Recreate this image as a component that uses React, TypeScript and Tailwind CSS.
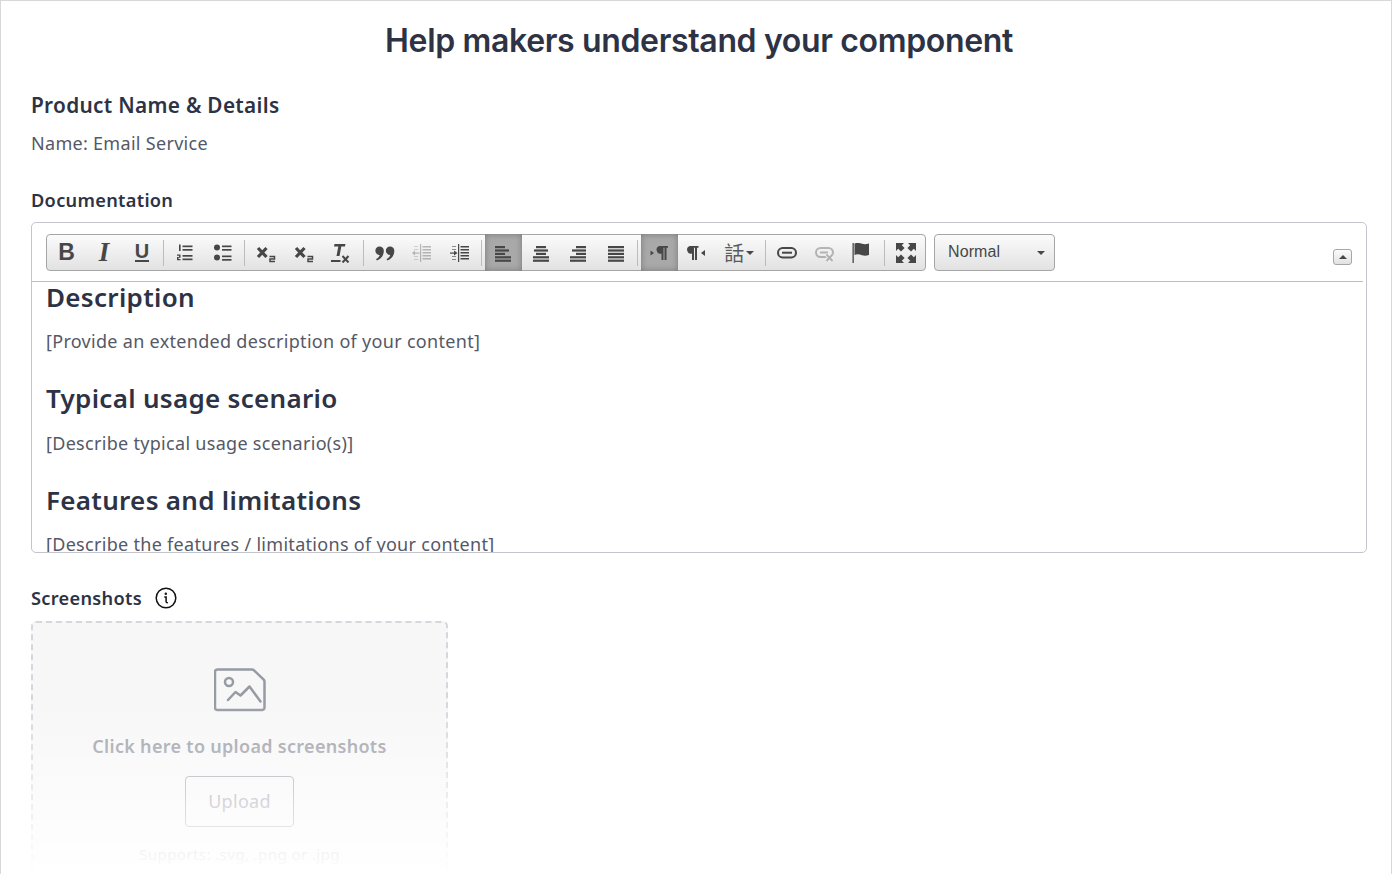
import type { ReactNode } from 'react';

const ink = '#474747';

function Btn({ children, active, w = 'w-[37.5px]' }: { children: ReactNode; active?: boolean; w?: string }) {
  return (
    <div
      className={`${w} shrink-0 flex items-center justify-center ${
        active ? 'h-[37px] bg-[#a9a9a9] shadow-[inset_0_0_6px_#777777]' : 'h-[35px]'
      }`}
    >
      {children}
    </div>
  );
}

function Sep() {
  return <div className="w-px h-[26px] mx-[2.5px] shrink-0 bg-[#bcbcbc]" />;
}

// 20x20 svg used for all the toolbar glyphs
function Ico({ children }: { children: ReactNode }) {
  return (
    <svg width="20" height="20" viewBox="0 0 20 20" fill={ink}>
      {children}
    </svg>
  );
}

function Lines({ rows }: { rows: [number, number][] }) {
  return (
    <Ico>
      {rows.map(([x, w], i) => (
        <rect key={i} x={x} y={3 + i * 3.4} width={w} height="2.2" />
      ))}
    </Ico>
  );
}

function Subscript() {
  return (
    <Ico>
      <path d="M2 5 10.500 14M10.500 5 2 14" fill="none" stroke={ink} strokeWidth="3.200" />
      <path d="M13.500 13.500h5v2.500h-4.500v2.500h5" fill="none" stroke={ink} strokeWidth="1.500" />
    </Ico>
  );
}

function IndentBody() {
  return (
    <>
      <rect x="9" y="1" width="1.200" height="18" />
      {[3, 6, 9, 12, 15].map((y) => (
        <rect key={y} x="11.500" y={y} width="8.500" height="1.500" />
      ))}
      {[3, 6, 13, 16].map((y) => (
        <rect key={y} x="3" y={y} width="4" height="1" opacity="0.6" />
      ))}
    </>
  );
}

const quote = 'M4.500 3.500a4.300 4.300 0 0 1 4.300 4.600c0 4.500-3 8-7 9.400l-.7-1.400c2-1 3.200-2.500 3.600-4.100A4.200 4.200 0 0 1 4.500 3.500z';

function Toolbar() {
  return (
    <div className="w-[880px] h-[37px] shrink-0 flex items-center pl-px rounded-[4px] border border-[#a6a6a6] bg-gradient-to-b from-[#fbfbfb] to-[#e2e2e2]">
      <Btn><span className="font-['Liberation_Sans'] font-bold text-[23px] text-[#474747] leading-none">B</span></Btn>
      <Btn><span className="font-['Liberation_Serif'] italic font-bold text-[27px] text-[#474747] leading-none">I</span></Btn>
      <Btn>
        <Ico>
          <text x="10" y="15" textAnchor="middle" fontFamily="Liberation Sans" fontWeight="700" fontSize="20">U</text>
          <rect x="3" y="17" width="14" height="2" />
        </Ico>
      </Btn>
      <Sep />
      <Btn>
        <Ico>
          <g transform="translate(-1.500 0)">
            <rect x="9" y="2.500" width="10" height="1.700" />
            <rect x="9" y="6" width="10" height="1.700" />
            <rect x="9" y="12" width="10" height="1.700" />
            <rect x="9" y="15.500" width="10" height="1.700" />
            <rect x="5.500" y="1.500" width="1.600" height="6.500" />
            <path d="M3.500 11.500H7v3.200H5v1.400h2v1.200H3.500v-3.200h2v-1.400h-2z" />
          </g>
        </Ico>
      </Btn>
      <Btn>
        <Ico>
          <g transform="translate(-1 0)">
            <circle cx="5" cy="4.500" r="3" />
            <circle cx="5" cy="14.500" r="3" />
            <rect x="10" y="2.500" width="9.500" height="1.700" />
            <rect x="10" y="6" width="9.500" height="1.700" />
            <rect x="10" y="12.500" width="9.500" height="1.700" />
            <rect x="10" y="16" width="9.500" height="1.700" />
          </g>
        </Ico>
      </Btn>
      <Sep />
      <Btn><Subscript /></Btn>
      <Btn><Subscript /></Btn>
      <Btn>
        <Ico>
          <path d="M3.500 1h11l-.6 2.600h-3.600l-1.800 9.400h-3l1.800-9.400H3z" />
          <rect x="0" y="17" width="9.500" height="2" />
          <path d="M11.500 13 17.500 19.500M17.500 13 11.500 19.500" fill="none" stroke={ink} strokeWidth="2" />
        </Ico>
      </Btn>
      <Sep />
      <Btn>
        <Ico>
          <path d={quote} />
          <path d={quote} transform="translate(10.500 0)" />
        </Ico>
      </Btn>
      <Btn>
        <Ico>
          <g opacity="0.35" transform="translate(-1 0)">
            <IndentBody />
            <rect x="3.500" y="9.500" width="5" height="1.200" />
            <path d="M1 10 4 7.500v5z" />
          </g>
        </Ico>
      </Btn>
      <Btn>
        <Ico>
          <g transform="translate(-1 0)">
            <IndentBody />
            <rect x="1" y="9.500" width="4.500" height="1.200" />
            <path d="M8.500 10 5 7.500v5z" />
          </g>
        </Ico>
      </Btn>
      <Sep />
      <Btn active><Lines rows={[[2, 10], [2, 14], [2, 10], [2, 16], [2, 16]]} /></Btn>
      <Btn><Lines rows={[[5, 10], [3, 14], [5, 10], [2, 16], [2, 16]]} /></Btn>
      <Btn><Lines rows={[[8, 10], [4, 14], [8, 10], [2, 16], [2, 16]]} /></Btn>
      <Btn><Lines rows={[[2, 16], [2, 16], [2, 16], [2, 16], [2, 16]]} /></Btn>
      <Sep />
      <Btn active>
        <Ico>
          <path d="M1.500 7.500 5 10l-3.500 2.500z" />
          <path d="M10.500 3h8.500v1.700h-1.500V17h-2V4.700h-1V17h-2v-6.500a3.800 3.800 0 0 1-2-7.500z" />
        </Ico>
      </Btn>
      <Btn>
        <Ico>
          <path d="M3 3h8.500v1.700H10V17H8V4.700H7V17H5v-6.500A3.800 3.800 0 0 1 3 3z" />
          <path d="M18 7 14 10l4 3z" />
        </Ico>
      </Btn>
      <Btn w="w-[47px]">
        <span className="font-['Noto_Sans_CJK_TC',sans-serif] text-[20px] leading-none text-[#5a5a5a]">話</span>
        <svg width="8" height="4" viewBox="0 0 8 4" className="ml-px" fill={ink}>
          <path d="M0 0h8L4 4z" />
        </svg>
      </Btn>
      <Sep />
      <Btn>
        <Ico>
          <rect x="1" y="5" width="18" height="9.500" rx="4.700" fill="none" stroke={ink} strokeWidth="2" />
          <rect x="5" y="8.700" width="10" height="2" />
        </Ico>
      </Btn>
      <Btn>
        <Ico>
          <g opacity="0.35">
            <rect x="1" y="5" width="17" height="9" rx="4.500" fill="none" stroke={ink} strokeWidth="2" />
            <rect x="5" y="8.500" width="8" height="2" />
            <path d="M11.500 11.500 17.500 18M17.500 11.500 11.500 18" fill="none" stroke="#ffffff" strokeWidth="4" />
            <path d="M11.500 11.500 17.500 18M17.500 11.500 11.500 18" fill="none" stroke={ink} strokeWidth="2" />
          </g>
        </Ico>
      </Btn>
      <Btn>
        <Ico>
          <rect x="0.500" y="0" width="1.300" height="20" />
          <path d="M2.500 1c3-1.200 5-.4 7.500.3 2 .5 4.500.5 7-.3v11.500c-2.500.8-5 .8-7 .2-2.500-.7-4.500-1.500-7.500-.2z" transform="translate(0 -.5)" />
        </Ico>
      </Btn>
      <Sep />
      <Btn>
        <Ico>
          <path d="M0 0h8L5.800 2.200l2.800 2.800-3.600 3.600-2.800-2.800L0 8z" />
          <path d="M20 0v8l-2.200-2.200-2.800 2.800-3.600-3.600 2.800-2.800L12 0z" />
          <path d="M0 20v-8l2.200 2.200 2.800-2.800 3.600 3.600-2.800 2.800L8 20z" />
          <path d="M20 20h-8l2.200-2.200-2.800-2.800 3.600-3.600 2.800 2.800L20 12z" />
        </Ico>
      </Btn>
    </div>
  );
}

function Combo() {
  return (
    <div className="ml-2 w-[121px] h-[37px] shrink-0 flex items-center justify-between pl-[13px] pr-[9px] rounded-[4px] border border-[#a6a6a6] bg-gradient-to-b from-[#fbfbfb] to-[#e2e2e2]">
      <span className="font-['Liberation_Sans'] text-[16px] tracking-[0.1px] text-[#474747] -mt-px">Normal</span>
      <svg width="8" height="4" viewBox="0 0 8 4" fill={ink}>
        <path d="M0 0h8L4 4z" />
      </svg>
    </div>
  );
}

function Editor() {
  return (
    <div className="mt-[9px] w-[1336px] h-[331px] rounded-[5px] border border-[#c4c4cc] overflow-hidden">
      <div className="h-[59px] mr-[3px] flex items-start pl-[14px] pt-[11px] border-b border-[#bdbdbd] relative">
        <Toolbar />
        <Combo />
        <div className="absolute left-[1301px] top-[26px] w-[19px] h-[16px] rounded-[3px] border border-[#a6a6a6] bg-gradient-to-b from-[#fbfbfb] to-[#e2e2e2] flex items-center justify-center">
          <svg width="8" height="4" viewBox="0 0 8 4" fill={ink}>
            <path d="M0 4h8L4 0z" />
          </svg>
        </div>
      </div>
      <div className="-mt-[2px] pl-[14px] text-[#555866]">
        <h2 className="text-[26px] leading-[34px] font-semibold text-[#2d3345]">Description</h2>
        <p className="mt-[14px] text-[18px] leading-[26px]">[Provide an extended description of your content]</p>
        <h2 className="mt-[27px] text-[26px] leading-[34px] font-semibold text-[#2d3345]">Typical usage scenario</h2>
        <p className="mt-[15px] text-[18px] leading-[26px]">[Describe typical usage scenario(s)]</p>
        <h2 className="mt-[27px] text-[26px] leading-[34px] font-semibold text-[#2d3345]">Features and limitations</h2>
        <p className="mt-[14px] text-[18px] leading-[26px]">[Describe the features / limitations of your content]</p>
      </div>
    </div>
  );
}

function Uploader() {
  return (
    <div className="mt-[10px] w-[417px] h-[300px] rounded-[5px] border-2 border-dashed border-[#d6d6dc] bg-[#f7f7f8] flex flex-col items-center pt-[45px]">
      <svg width="52" height="44" viewBox="0 0 52 44" fill="none" stroke="#979aa3" strokeWidth="2.500" strokeLinecap="round" strokeLinejoin="round">
        <path d="M3.500 1.500H38a3 3 0 0 1 2 .8l9.700 9.400a3 3 0 0 1 .8 2V39.500a2.500 2.500 0 0 1-2.500 2.500H3.500A2.500 2.500 0 0 1 1 39.500V4a2.500 2.500 0 0 1 2.500-2.500z" />
        <circle cx="15" cy="14" r="4" />
        <path d="M14 32l7.500-8 5 3.500 9-9 11 15" />
      </svg>
      <div className="mt-[21px] text-[18px] leading-[26px] font-semibold text-[#9a9aa4]">Click here to upload screenshots</div>
      <div className="mt-[17px] w-[109px] h-[51px] rounded-[4px] border border-[#9f9fa8] flex items-center justify-center text-[18px] text-[#9a9aa4]">
        Upload
      </div>
      <div className="mt-[15px] text-[15.3px] leading-[24px] text-[#9a9aa4]">Supports: .svg, .png or .jpg</div>
    </div>
  );
}

export default function App() {
  return (
    <div className="relative w-[1392px] h-[874px] overflow-hidden bg-white border-x border-t border-[#d8d8d8] pl-[30px] pr-[24px] font-['Noto_Sans',sans-serif] tracking-[0.3px]">
      <h1 className="mt-[20px] text-center font-['Inter',sans-serif] font-semibold text-[32px] leading-[40px] tracking-[-0.35px] text-[#2d3345]">
        Help makers understand your component
      </h1>
      <h3 className="mt-[29px] text-[20.8px] leading-[30px] font-semibold text-[#2d3345]">Product Name &amp; Details</h3>
      <p className="mt-[10px] text-[18px] leading-[26px] text-[#555866]">Name: Email Service</p>
      <h4 className="mt-[31px] text-[18.2px] leading-[26px] font-semibold text-[#2d3345]">Documentation</h4>
      <Editor />
      <div className="mt-[32px] flex items-center gap-[13px]">
        <span className="text-[18.2px] leading-[26px] font-semibold text-[#2d3345]">Screenshots</span>
        <svg width="22" height="22" viewBox="0 0 22 22" fill="none" stroke="#111111" strokeWidth="1.500" strokeLinecap="round">
          <circle cx="11" cy="11" r="9.800" />
          <path d="M9.800 10h1.300v4.500c0 .8.400 1.200 1.200 1.200" />
          <circle cx="10.800" cy="6.800" r="0.500" fill="#111111" />
        </svg>
      </div>
      <Uploader />
      {/* fade over the bottom of the page */}
      <div className="absolute left-0 right-0 top-[700px] bottom-0 bg-gradient-to-b from-white/0 to-white" />
    </div>
  );
}
